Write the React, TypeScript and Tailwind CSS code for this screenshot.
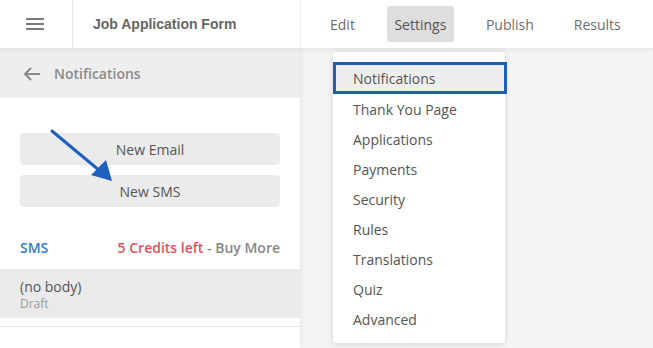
import React from 'react';

const menuItems = [
  'Thank You Page',
  'Applications',
  'Payments',
  'Security',
  'Rules',
  'Translations',
  'Quiz',
  'Advanced',
];

const App: React.FC = () => {
  return (
    <div className="w-[653px] h-[348px] overflow-hidden bg-[#f5f5f5] flex flex-col font-['Open_Sans',sans-serif] relative">
      {/* top bar */}
      <div className="h-[49px] bg-white flex items-stretch border-b border-[#e8e8e8] shadow-[0_2px_4px_rgba(0,0,0,0.05)] relative z-20">
        <div className="w-[73px] border-r border-[#e6e6e6] flex items-center justify-center">
          <svg width="20" height="14" viewBox="0 0 20 14" className="ml-[-2px]">
            <rect x="1" y="1" width="18" height="2" fill="#7a7a7a" />
            <rect x="1" y="6" width="18" height="2" fill="#7a7a7a" />
            <rect x="1" y="11" width="18" height="2" fill="#7a7a7a" />
          </svg>
        </div>
        <div className="w-[228px] border-r border-[#ececec] flex items-center pl-[20px] font-['Liberation_Sans',sans-serif] font-bold text-[14px] text-[#666]">
          Job Application Form
        </div>
        <div className="flex items-center text-[14px] text-[#6e6e6e]">
          <span className="ml-[29px]">Edit</span>
          <span className="ml-[32px] bg-[#dedede] rounded-[3px] h-[36px] w-[67px] flex items-center justify-center text-[#555]">Settings</span>
          <span className="ml-[32px]">Publish</span>
          <span className="ml-[40px]">Results</span>
        </div>
      </div>

      <div className="flex flex-1">
        {/* left panel */}
        <div className="w-[300px] bg-white shadow-[2px_0_6px_rgba(0,0,0,0.06)] relative z-10">
          <div className="h-[49px] bg-[#eeeeee] flex items-center">
            <svg width="18" height="16" viewBox="0 0 18 16" className="ml-[23px]">
              <path d="M17 8H2M8 2L2 8l6 6" stroke="#888" strokeWidth="2" fill="none" />
            </svg>
            <span className="ml-[13px] text-[14px] font-semibold text-[#8a8a8a]">Notifications</span>
          </div>
          <div className="px-[20px] pt-[35px] flex flex-col gap-[10px] relative">
            <div className="h-[32px] bg-[#ebebeb] rounded-[4px] flex items-center justify-center text-[14px] text-[#555]">New Email</div>
            <div className="h-[32px] bg-[#ebebeb] rounded-[4px] flex items-center justify-center text-[14px] text-[#555]">New SMS</div>
            <svg width="70" height="60" viewBox="0 0 70 60" className="absolute left-[48px] top-[31px]">
              <path d="M4 2 L52 42" stroke="#1f5fbf" strokeWidth="3" strokeLinecap="round" />
              <path d="M43 46 L64 52 L58 31 Z" fill="#1f5fbf" />
            </svg>
          </div>
          <div className="flex items-center justify-between px-[20px] mt-[30px] text-[14px] font-semibold">
            <span className="text-[#2f80d1]">SMS</span>
            <span>
              <span className="text-[#e3505c]">5 Credits left</span>
              <span className="text-[#888]"> - Buy More</span>
            </span>
          </div>
          <div className="mt-[11px] h-[49px] bg-[#eaeaea] px-[20px] flex flex-col justify-center">
            <span className="text-[14px] text-[#555] leading-[19px]">(no body)</span>
            <span className="text-[12px] text-[#999] leading-[15px]">Draft</span>
          </div>
          <div className="mt-[8px] border-t border-[#e5e5e5]" />
        </div>
      </div>

      {/* settings dropdown */}
      <div className="absolute left-[333px] top-[52px] w-[172px] bg-white rounded-[3px] shadow-[0_1px_6px_rgba(0,0,0,0.15)] z-30 pt-[10px] pb-[9px]">
        <div className="h-[32px] -mr-[2px] border-[3px] border-[#1f5db8] bg-[#eeeeee] flex items-center pl-[17px] text-[14px] text-[#555]">
          Notifications
        </div>
        {menuItems.map((item) => (
          <div key={item} className="h-[30px] flex items-center pl-[20px] text-[14px] text-[#555]">
            {item}
          </div>
        ))}
      </div>
    </div>
  );
};

export default App;
